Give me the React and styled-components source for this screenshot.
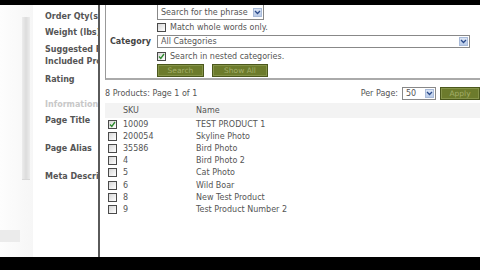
import React from "react";
import styled, { createGlobalStyle } from "styled-components";

const Global = createGlobalStyle`
  html, body { margin: 0; padding: 0; background: #fff; overflow: hidden; }
  body { font-family: "DejaVu Sans", Verdana, sans-serif; }
`;

const Frame = styled.div`
  width: 480px;
  height: 270px;
  display: flex;
  flex-direction: column;
  overflow: hidden;
`;

const BlackBar = styled.div`
  height: ${(p) => p.h}px;
  background: #000;
  flex-shrink: 0;
`;

const Main = styled.div`
  flex: 1;
  display: flex;
  min-height: 0;
`;

const LeftStrip = styled.div`
  width: 33px;
  display: flex;
  flex-direction: column;
  background: linear-gradient(to right, #fdfdfd 0, #f6f6f6 100%);
`;

const ScrollTrack = styled.div`
  margin: 12px 0 0 22px;
  width: 8px;
  height: 162px;
  background: linear-gradient(to right, #ececec, #dcdcdc, #ececec);
  border-bottom: 1px solid #d8d8d8;
`;

const GrayBlock = styled.div`
  margin-top: 50px;
  width: 20px;
  height: 12px;
  background: #ebebeb;
`;

const LabelPanel = styled.div`
  width: 53px;
  padding-left: 12px;
  overflow: hidden;
  white-space: nowrap;
  display: flex;
  flex-direction: column;
  background: #fff;
`;

const Label = styled.div`
  font-size: 8px;
  font-weight: bold;
  color: ${(p) => (p.faded ? "#c8c8c8" : "#555")};
  height: 10px;
  line-height: 10px;
  margin-top: ${(p) => p.top}px;
`;

const Divider = styled.div`
  width: 2px;
  background: #5a5a5a;
`;

const Popup = styled.div`
  flex: 1;
  display: flex;
  flex-direction: column;
  background: #fff;
  color: #555;
  font-size: 8px;
  padding-left: 5px;
`;

const SearchBox = styled.div`
  display: grid;
  grid-template-columns: 51px 1fr;
  grid-template-rows: 15px 14px 15px 14px 14px;
  align-items: center;
  border-left: 1px solid #999;
  border-bottom: 2px solid #aaa;
  padding-bottom: 1px;
`;

const FieldLabel = styled.div`
  grid-column: 1;
  grid-row: ${(p) => p.row};
  font-weight: bold;
  color: #444;
  padding-left: 4px;
`;

const Cell = styled.div`
  grid-column: 2;
  grid-row: ${(p) => p.row};
  display: flex;
  align-items: center;
  gap: ${(p) => p.gap || 4}px;
`;

const SelectBox = styled.div`
  width: ${(p) => p.w}px;
  height: ${(p) => p.h || 13}px;
  box-sizing: border-box;
  border: 1px solid #888;
  border-top: ${(p) => (p.noTop ? "none" : "1px solid #888")};
  display: flex;
  align-items: center;
  justify-content: space-between;
  padding: 0 1px 0 3px;
  background: #fff;
  color: #555;
  align-self: ${(p) => (p.top ? "flex-start" : "center")};
`;

const Arrow = styled.span`
  width: 9px;
  height: 9px;
  background: linear-gradient(#dbe5f5, #b9cbe8);
  border: 1px solid #a9bbd9;
  box-sizing: border-box;
  display: flex;
  align-items: center;
  justify-content: center;
`;

const Box = styled.span`
  width: 9px;
  height: 9px;
  box-sizing: border-box;
  border: 1px solid #4a4a4a;
  background: linear-gradient(135deg, #d6d6d6, #fff);
  display: inline-flex;
  align-items: center;
  justify-content: center;
  flex-shrink: 0;
`;

const OliveButton = styled.div`
  width: ${(p) => p.w}px;
  height: 13px;
  box-sizing: border-box;
  background: #6c7b2c;
  border: 1px solid #4b581c;
  box-shadow: inset 0 0 0 1px #86944a;
  color: #a3ae6a;
  font-size: 7.5px;
  display: flex;
  align-items: center;
  justify-content: center;
`;

const InfoRow = styled.div`
  height: 20px;
  display: flex;
  align-items: center;
  justify-content: space-between;
  margin-top: 3px;
`;

const PerPage = styled.div`
  display: flex;
  align-items: center;
  gap: 4px;
`;

const Table = styled.div`
  display: flex;
  flex-direction: column;
`;

const Row = styled.div`
  display: grid;
  grid-template-columns: 15px 73px 1fr;
  align-items: center;
  height: ${(p) => (p.head ? 15 : 12.2)}px;
  background: ${(p) => (p.head ? "#f3f3f3" : "transparent")};
  padding-left: 3px;
`;

const Chevron = () => (
  <svg width="7" height="5" viewBox="0 0 7 5">
    <path d="M1 1 L3.5 3.5 L6 1" stroke="#2a4a8a" strokeWidth="1.3" fill="none" />
  </svg>
);

const Check = () => (
  <svg width="7" height="7" viewBox="0 0 7 7">
    <path d="M1 3.5 L2.8 5.5 L6 1" stroke="#2c8a2c" strokeWidth="1.3" fill="none" />
  </svg>
);

const labels = [
  ["Order Qty(s)", 7],
  ["Weight (lbs)", 6],
  ["Suggested Retail", 7],
  ["Included Products", 2],
  ["Rating", 8],
  ["Information", 15, true],
  ["Page Title", 6],
  ["Page Alias", 18],
  ["Meta Description", 18],
];

const products = [
  ["10009", "TEST PRODUCT 1", true],
  ["200054", "Skyline Photo"],
  ["35586", "Bird Photo"],
  ["4", "Bird Photo 2"],
  ["5", "Cat Photo"],
  ["6", "Wild Boar"],
  ["8", "New Test Product"],
  ["9", "Test Product Number 2"],
];

export default function App() {
  return (
    <Frame>
      <Global />
      <BlackBar h={5} />
      <Main>
        <LeftStrip>
          <ScrollTrack />
          <GrayBlock />
        </LeftStrip>
        <LabelPanel>
          {labels.map(([t, top, faded]) => (
            <Label key={t} top={top} faded={faded}>
              {t}
            </Label>
          ))}
        </LabelPanel>
        <Divider />
        <Popup>
          <SearchBox>
            <Cell row={1}>
              <SelectBox w={107} h={15} noTop top>
                Search for the phrase
                <Arrow>
                  <Chevron />
                </Arrow>
              </SelectBox>
            </Cell>
            <Cell row={2}>
              <Box />
              Match whole words only.
            </Cell>
            <FieldLabel row={3}>Category</FieldLabel>
            <Cell row={3}>
              <SelectBox w={313}>
                All Categories
                <Arrow>
                  <Chevron />
                </Arrow>
              </SelectBox>
            </Cell>
            <Cell row={4}>
              <Box>
                <Check />
              </Box>
              Search in nested categories.
            </Cell>
            <Cell row={5} gap={8}>
              <OliveButton w={47}>Search</OliveButton>
              <OliveButton w={56}>Show All</OliveButton>
            </Cell>
          </SearchBox>
          <InfoRow>
            <span>8 Products: Page 1 of 1</span>
            <PerPage>
              Per Page:
              <SelectBox w={34}>
                50
                <Arrow>
                  <Chevron />
                </Arrow>
              </SelectBox>
              <OliveButton w={40}>Apply</OliveButton>
            </PerPage>
          </InfoRow>
          <Table>
            <Row head>
              <span />
              <span>SKU</span>
              <span>Name</span>
            </Row>
            {products.map(([sku, name, checked]) => (
              <Row key={sku}>
                <Box>{checked && <Check />}</Box>
                <span>{sku}</span>
                <span>{name}</span>
              </Row>
            ))}
          </Table>
        </Popup>
      </Main>
      <BlackBar h={13} />
    </Frame>
  );
}
